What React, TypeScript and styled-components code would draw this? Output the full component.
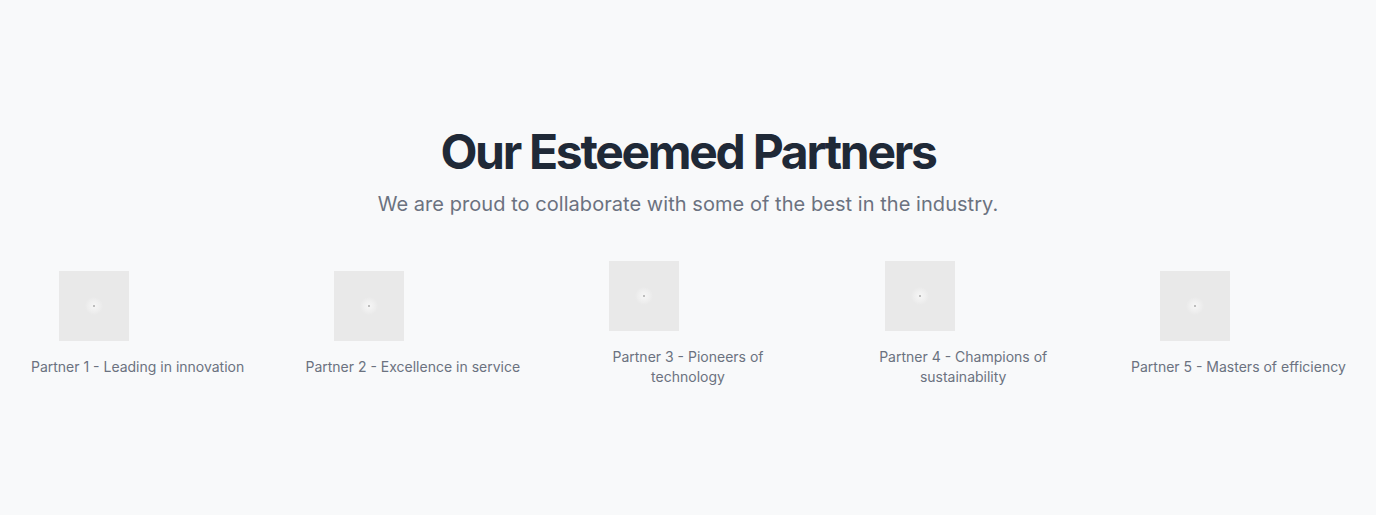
import React from "react";
import styled, { createGlobalStyle } from "styled-components";

const Global = createGlobalStyle`
  html, body { margin: 0; padding: 0; background: #f8f9fa; }
  body { font-family: Inter, "Noto Sans", sans-serif; }
`;

const Section = styled.section`
  min-height: 515px;
  box-sizing: border-box;
  padding: 123px 0 0;
  background: #f8f9fa;
  display: flex;
  flex-direction: column;
  align-items: center;
`;

const Title = styled.h2`
  margin: 0;
  font-size: 48px;
  line-height: 58px;
  font-weight: 700;
  letter-spacing: -2.3px;
  color: #1f2937;
  text-align: center;
`;

const Subtitle = styled.p`
  margin: 9px 0 0;
  font-size: 20px;
  line-height: 28px;
  letter-spacing: 0.05px;
  color: #6b7280;
  text-align: center;
`;

const Grid = styled.div`
  margin-top: 43px;
  width: 100%;
  display: grid;
  grid-template-columns: repeat(5, 1fr);
  align-items: center;
`;

const Item = styled.div`
  display: flex;
  flex-direction: column;
  align-items: center;
  gap: 16px;
  padding: 0 25px;
`;

const Logo = styled.div`
  align-self: flex-start;
  margin-left: 34px;
  width: 70px;
  height: 70px;
  background:
    radial-gradient(circle at center, #bdbdbd 0 1px, #f4f4f4 1.5px, #eeeeee 6px, #e9e9e9 9px);
`;

const Caption = styled.p`
  margin: 0;
  font-size: 14px;
  line-height: 20px;
  color: #6b7280;
  text-align: center;
`;

const partners = [
  "Partner 1 - Leading in innovation",
  "Partner 2 - Excellence in service",
  "Partner 3 - Pioneers of technology",
  "Partner 4 - Champions of sustainability",
  "Partner 5 - Masters of efficiency",
];

export default function App() {
  return (
    <>
      <Global />
      <Section>
        <Title>Our Esteemed Partners</Title>
        <Subtitle>We are proud to collaborate with some of the best in the industry.</Subtitle>
        <Grid>
          {partners.map((p) => (
            <Item key={p}>
              <Logo role="img" aria-label={p} />
              <Caption>{p}</Caption>
            </Item>
          ))}
        </Grid>
      </Section>
    </>
  );
}
